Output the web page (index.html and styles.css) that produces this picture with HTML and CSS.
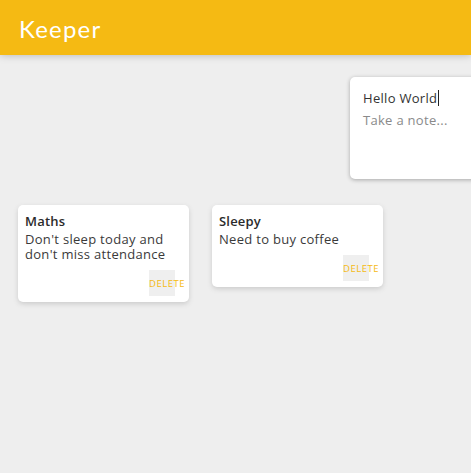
FILE: index.html
```html
<!DOCTYPE html>
<html>
<head>
<meta charset="utf-8">
<link rel="stylesheet" href="styles.css">
</head>
<body>
<header class="header"><h1 class="logo">Keeper</h1></header>
<main class="main">
  <div class="create-row">
    <form class="create-note">
      <div class="create-title">Hello World<span class="caret"></span></div>
      <div class="create-placeholder">Take a note...</div>
    </form>
  </div>
  <div class="notes">
    <div class="note">
      <h2 class="note-title">Maths</h2>
      <p class="note-body">Don't sleep today and don't miss attendance</p>
      <div class="note-actions"><button class="delete-btn">DELETE</button></div>
    </div>
    <div class="note">
      <h2 class="note-title">Sleepy</h2>
      <p class="note-body">Need to buy coffee</p>
      <div class="note-actions"><button class="delete-btn">DELETE</button></div>
    </div>
  </div>
</main>
</body>
</html>
```
FILE: styles.css
```css
html, body {
  margin: 0;
  padding: 0;
}
body {
  background: #eeeeee;
  font-family: "Open Sans", "Noto Sans", sans-serif;
  width: 471px;
  height: 473px;
  overflow: hidden;
}
.header {
  background: #f5ba13;
  height: 55px;
  box-sizing: border-box;
  padding: 0 19px;
  display: flex;
  align-items: center;
  box-shadow: 0 0 8px 0 rgba(0, 0, 0, 0.25);
  position: relative;
}
.logo {
  margin: 0;
  color: #fff;
  font-family: "Lato", "Noto Sans", sans-serif;
  font-weight: 400;
  font-size: 24px;
  letter-spacing: 1.2px;
  padding-top: 2px;
}
.main {
  display: flex;
  flex-direction: column;
}
.create-row {
  padding-top: 22px;
  padding-left: 350px;
}
.create-note {
  width: 180px;
  height: 102px;
  box-sizing: border-box;
  background: #fff;
  border-radius: 5px;
  box-shadow: 0 1px 4px rgba(0, 0, 0, 0.3);
  padding: 12px 13px;
  font-size: 13px;
  letter-spacing: 0.3px;
}
.create-title {
  color: #333;
  line-height: 18px;
  display: flex;
  align-items: center;
}
.caret {
  display: inline-block;
  width: 1px;
  height: 16px;
  background: #222;
  margin-left: 1px;
}
.create-placeholder {
  color: #8a8a8a;
  line-height: 18px;
  margin-top: 4px;
}
.notes {
  display: flex;
  align-items: flex-start;
  gap: 23px;
  padding-left: 18px;
  padding-top: 26px;
}
.note {
  width: 171px;
  box-sizing: border-box;
  background: #fff;
  border-radius: 5px;
  box-shadow: 0 2px 5px #cccccc;
  padding: 8px 14px 6px 7px;
}
.note-title {
  margin: 0;
  font-size: 13px;
  font-weight: 600;
  color: #2b2b2b;
  line-height: 16px;
  letter-spacing: 0.2px;
}
.note-body {
  margin: 3px 0 0 0;
  font-size: 13px;
  color: #3a3a3a;
  line-height: 15px;
  letter-spacing: 0.3px;
}
.note-actions {
  display: flex;
  justify-content: flex-end;
  margin-top: 8px;
}
.delete-btn {
  width: 26px;
  height: 26px;
  padding: 0;
  border: none;
  background: #efefef;
  color: #f5ba13;
  font-family: "Open Sans", sans-serif;
  font-size: 9.5px;
  letter-spacing: 0.5px;
  text-align: left;
  white-space: nowrap;
  overflow: visible;
  display: flex;
  align-items: center;
}
```
